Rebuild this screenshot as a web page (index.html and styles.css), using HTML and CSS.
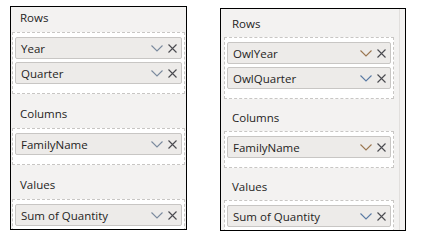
FILE: index.html
```html
<!DOCTYPE html>
<html lang="en">
<head>
  <meta charset="UTF-8">
  <title>Field wells</title>
  <link rel="stylesheet" href="styles.css">
</head>
<body>
  <div class="page">

    <!-- left: original fields -->
    <div class="panel panel-left">
      <div class="well-title first">Rows</div>
      <div class="drop">
        <div class="pill"><span>Year</span><span class="acts"><svg class="chev" width="12" height="7" viewBox="0 0 12 7"><polyline points="0.5,0.5 6,6 11.5,0.5"/></svg><svg class="del" width="9" height="9" viewBox="0 0 9 9"><path d="M0.5 0.5L8.5 8.5M8.5 0.5L0.5 8.5"/></svg></span></div>
        <div class="pill"><span>Quarter</span><span class="acts"><svg class="chev" width="12" height="7" viewBox="0 0 12 7"><polyline points="0.5,0.5 6,6 11.5,0.5"/></svg><svg class="del" width="9" height="9" viewBox="0 0 9 9"><path d="M0.5 0.5L8.5 8.5M8.5 0.5L0.5 8.5"/></svg></span></div>
      </div>
      <div class="well-title">Columns</div>
      <div class="drop">
        <div class="pill"><span>FamilyName</span><span class="acts"><svg class="chev" width="12" height="7" viewBox="0 0 12 7"><polyline points="0.5,0.5 6,6 11.5,0.5"/></svg><svg class="del" width="9" height="9" viewBox="0 0 9 9"><path d="M0.5 0.5L8.5 8.5M8.5 0.5L0.5 8.5"/></svg></span></div>
      </div>
      <div class="well-title">Values</div>
      <div class="drop">
        <div class="pill"><span>Sum of Quantity</span><span class="acts"><svg class="chev" width="12" height="7" viewBox="0 0 12 7"><polyline points="0.5,0.5 6,6 11.5,0.5"/></svg><svg class="del" width="9" height="9" viewBox="0 0 9 9"><path d="M0.5 0.5L8.5 8.5M8.5 0.5L0.5 8.5"/></svg></span></div>
      </div>
    </div>

    <!-- right: owl fields -->
    <div class="panel panel-right">
      <div class="scroll">
        <div class="well-title first">Rows</div>
        <div class="drop">
          <div class="pill"><span>OwlYear</span><span class="acts"><svg class="chev warm" width="12" height="7" viewBox="0 0 12 7"><polyline points="0.5,0.5 6,6 11.5,0.5"/></svg><svg class="del" width="9" height="9" viewBox="0 0 9 9"><path d="M0.5 0.5L8.5 8.5M8.5 0.5L0.5 8.5"/></svg></span></div>
          <div class="pill"><span>OwlQuarter</span><span class="acts"><svg class="chev cool" width="12" height="7" viewBox="0 0 12 7"><polyline points="0.5,0.5 6,6 11.5,0.5"/></svg><svg class="del" width="9" height="9" viewBox="0 0 9 9"><path d="M0.5 0.5L8.5 8.5M8.5 0.5L0.5 8.5"/></svg></span></div>
        </div>
        <div class="well-title">Columns</div>
        <div class="drop">
          <div class="pill"><span>FamilyName</span><span class="acts"><svg class="chev warm" width="12" height="7" viewBox="0 0 12 7"><polyline points="0.5,0.5 6,6 11.5,0.5"/></svg><svg class="del" width="9" height="9" viewBox="0 0 9 9"><path d="M0.5 0.5L8.5 8.5M8.5 0.5L0.5 8.5"/></svg></span></div>
        </div>
        <div class="well-title">Values</div>
        <div class="drop">
          <div class="pill"><span>Sum of Quantity</span><span class="acts"><svg class="chev cool" width="12" height="7" viewBox="0 0 12 7"><polyline points="0.5,0.5 6,6 11.5,0.5"/></svg><svg class="del" width="9" height="9" viewBox="0 0 9 9"><path d="M0.5 0.5L8.5 8.5M8.5 0.5L0.5 8.5"/></svg></span></div>
        </div>
      </div>
      <div class="track"></div>
    </div>

  </div>
</body>
</html>
```

FILE: styles.css
```css
body {
  margin: 0;
  background: #fff;
  font-family: "Open Sans", "Noto Sans", sans-serif;
  font-size: 11.5px;
  color: #252423;
}
.page {
  display: flex;
  align-items: flex-start;
  height: 242px;
}
.panel {
  box-sizing: border-box;
  border: 1px solid #000;
  background: #f3f2f1;
  overflow: hidden;
}
.panel-left {
  margin: 6px 0 0 10px;
  width: 177px;
  height: 224px;
  padding: 0 1px 0 1px;
}
.panel-right {
  margin: 8px 0 0 33px;
  width: 186px;
  height: 223px;
  display: flex;
  padding-left: 3px;
}
.scroll {
  flex: 1;
  padding-right: 5px;
}
.track {
  width: 5px;
  border-left: 1px solid #e1dfdd;
  background: #f3f2f1;
}
.well-title {
  height: 16px;
  line-height: 16px;
  padding: 12px 0 6px 8px;
}
.well-title.first {
  padding-top: 3px;
}
.panel-right .well-title {
  padding: 11px 0 5px 8px;
}
.panel-right .well-title.first {
  padding-top: 7px;
}
.drop {
  background: #fff;
  border: 1px dashed #c8c6c4;
  padding: 4px 2px 9px 2px;
  display: flex;
  flex-direction: column;
  gap: 3px;
}
.pill {
  box-sizing: border-box;
  height: 22px;
  display: flex;
  align-items: center;
  justify-content: space-between;
  background: #edebe9;
  border: 1px solid #c8c6c4;
  border-radius: 2px;
  padding: 0 4px 0 5px;
}
.acts {
  display: flex;
  align-items: center;
  gap: 5px;
}
.chev polyline {
  fill: none;
  stroke: #7a8a9e;
  stroke-width: 1.1;
}
.chev.warm polyline {
  stroke: #9a7650;
}
.chev.cool polyline {
  stroke: #5a7aa4;
}
.del path {
  fill: none;
  stroke: #4a4a50;
  stroke-width: 1.1;
}
```
